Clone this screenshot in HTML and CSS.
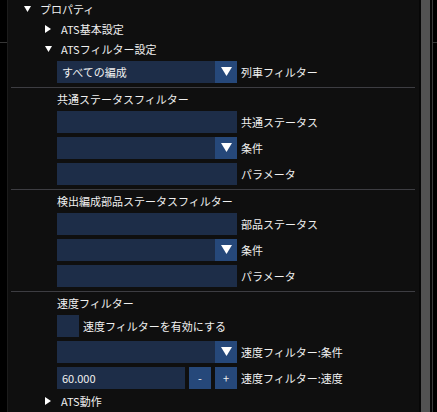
FILE: index.html
```html
<!DOCTYPE html>
<html lang="ja">
<head>
<meta charset="utf-8">
<title>プロパティ</title>
<link rel="stylesheet" href="styles.css">
</head>
<body>
<div class="app">
  <div class="side side-left"><div class="hline"></div></div>
  <div class="window">
    <div class="content">
      <div class="tree-row lvl1">
        <svg class="arrow-down" width="7" height="6" viewBox="0 0 7 6"><polygon points="0,0 7,0 3.5,6" fill="#fff"/></svg>
        <span>プロパティ</span>
      </div>
      <div class="tree-row lvl2">
        <svg class="arrow-right" width="6" height="8" viewBox="0 0 6 8"><polygon points="0,0 6,4 0,8" fill="#fff"/></svg>
        <span>ATS基本設定</span>
      </div>
      <div class="tree-row lvl2">
        <svg class="arrow-down" width="7" height="6" viewBox="0 0 7 6"><polygon points="0,0 7,0 3.5,6" fill="#fff"/></svg>
        <span>ATSフィルター設定</span>
      </div>

      <div class="item-row">
        <div class="combo"><span class="combo-text">すべての編成</span><span class="combo-btn"><svg width="11" height="9" viewBox="0 0 11 9"><polygon points="0,0 11,0 5.5,9" fill="#fff"/></svg></span></div>
        <span class="label">列車フィルター</span>
      </div>

      <div class="separator"></div>
      <div class="section-title">共通ステータスフィルター</div>
      <div class="item-row">
        <div class="input"></div>
        <span class="label">共通ステータス</span>
      </div>
      <div class="item-row">
        <div class="combo"><span class="combo-text"></span><span class="combo-btn"><svg width="11" height="9" viewBox="0 0 11 9"><polygon points="0,0 11,0 5.5,9" fill="#fff"/></svg></span></div>
        <span class="label">条件</span>
      </div>
      <div class="item-row">
        <div class="input"></div>
        <span class="label">パラメータ</span>
      </div>

      <div class="separator"></div>
      <div class="section-title">検出編成部品ステータスフィルター</div>
      <div class="item-row">
        <div class="input"></div>
        <span class="label">部品ステータス</span>
      </div>
      <div class="item-row">
        <div class="combo"><span class="combo-text"></span><span class="combo-btn"><svg width="11" height="9" viewBox="0 0 11 9"><polygon points="0,0 11,0 5.5,9" fill="#fff"/></svg></span></div>
        <span class="label">条件</span>
      </div>
      <div class="item-row">
        <div class="input"></div>
        <span class="label">パラメータ</span>
      </div>

      <div class="separator"></div>
      <div class="section-title">速度フィルター</div>
      <div class="item-row">
        <div class="checkbox"></div>
        <span class="label">速度フィルターを有効にする</span>
      </div>
      <div class="item-row">
        <div class="combo"><span class="combo-text"></span><span class="combo-btn"><svg width="11" height="9" viewBox="0 0 11 9"><polygon points="0,0 11,0 5.5,9" fill="#fff"/></svg></span></div>
        <span class="label">速度フィルター:条件</span>
      </div>
      <div class="item-row">
        <div class="number-group">
          <div class="number-input">60.000</div>
          <div class="step-btn">-</div>
          <div class="step-btn">+</div>
        </div>
        <span class="label">速度フィルター:速度</span>
      </div>

      <div class="tree-row lvl2 last">
        <svg class="arrow-right" width="6" height="8" viewBox="0 0 6 8"><polygon points="0,0 6,4 0,8" fill="#fff"/></svg>
        <span>ATS動作</span>
      </div>
    </div>
    <div class="scrollbar"><div class="grab"></div></div>
  </div>
  <div class="side side-right"><div class="hline"></div></div>
</div>
</body>
</html>
```

FILE: styles.css
```css
html, body {
  margin: 0;
  padding: 0;
  background: #000;
}

body {
  font-family: "Noto Sans CJK JP", "Noto Sans", sans-serif;
  font-size: 11px;
  color: #f0f0f0;
  overflow: hidden;
}

.app {
  display: flex;
  width: 437px;
  height: 412px;
  overflow: hidden;
}

.side {
  background: #000;
  padding-top: 42px;
}

.side-left {
  width: 7px;
  border-right: 1px solid #1c1c1c;
}

.side-right {
  width: 4px;
  border-left: 1px solid #3c3c3c;
}

.hline {
  height: 1px;
  background: #363636;
}

.window {
  flex: 1;
  display: flex;
  background: #0f0f0f;
}

.content {
  flex: 1;
  display: flex;
  flex-direction: column;
  gap: 4px;
  padding-top: 1px;
}

.tree-row {
  height: 16px;
  display: flex;
  align-items: center;
  white-space: nowrap;
}

.lvl1 {
  padding-left: 16px;
}

.lvl1 .arrow-down {
  margin-right: 9px;
}

.lvl2 {
  padding-left: 37px;
}

.lvl2 .arrow-down {
  margin-right: 9px;
}

.lvl2 .arrow-right {
  margin-right: 10px;
}

.item-row {
  display: flex;
  align-items: center;
  padding-left: 49px;
  height: 22px;
  white-space: nowrap;
}

.label {
  margin-left: 4px;
}

.combo,
.input {
  width: 180px;
  height: 22px;
  background: #1d2d48;
  display: flex;
  align-items: center;
}

.combo-text {
  flex: 1;
  padding-left: 5px;
}

.combo-btn {
  width: 22px;
  height: 22px;
  background: #26487a;
  display: flex;
  align-items: flex-start;
  justify-content: center;
}

.combo-btn svg {
  margin-top: 6px;
}

.checkbox {
  width: 22px;
  height: 22px;
  background: #1d2d48;
}

.number-group {
  display: flex;
  gap: 4px;
  width: 180px;
}

.number-input {
  width: 123px;
  height: 22px;
  line-height: 22px;
  padding-left: 5px;
  background: #1d2d48;
}

.step-btn {
  width: 22px;
  height: 22px;
  line-height: 22px;
  text-align: center;
  background: #26487a;
}

.separator {
  height: 1px;
  background: #3d3d42;
  margin: 0 4px 0 3px;
}

.section-title {
  height: 15px;
  line-height: 15px;
  padding-left: 49px;
  white-space: nowrap;
}

.scrollbar {
  width: 9px;
  padding: 0 2px;
  background: #070707;
}

.grab {
  height: 100%;
  background: #525252;
}
```
